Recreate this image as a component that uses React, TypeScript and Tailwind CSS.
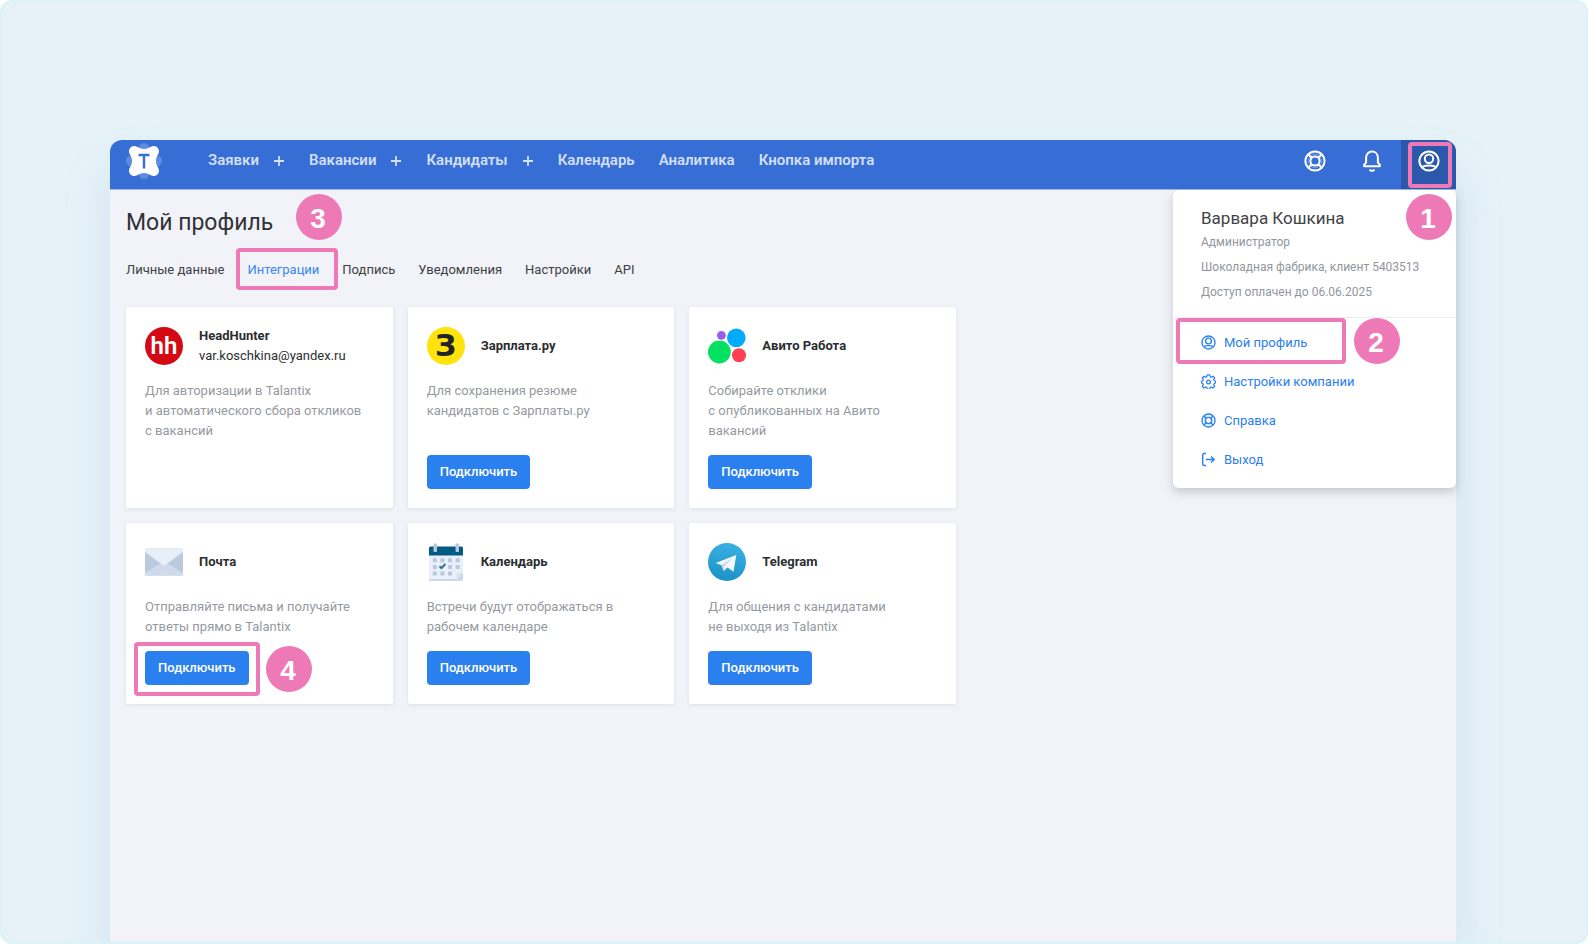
import type { ReactNode } from "react";

const Lifebuoy = ({ className }: { className?: string }) => (
  <svg viewBox="0 0 22 22" fill="none" stroke="currentColor" strokeWidth="2" className={className}>
    <circle cx="11" cy="11" r="9.6" />
    <circle cx="11" cy="11" r="4.6" />
    <path d="M4.4 4.4 8 8M17.6 4.4 14 8M4.4 17.6 8 14M17.6 17.6 14 14" />
    <circle cx="11" cy="11" r="6.8" strokeWidth="1" strokeOpacity="0.3" />
  </svg>
);

const UserCircle = ({ className }: { className?: string }) => (
  <svg viewBox="0 0 22 22" fill="none" stroke="currentColor" strokeWidth="2" className={className}>
    <circle cx="11" cy="11" r="9.6" />
    <circle cx="11" cy="8.8" r="4.2" />
    <path d="M4.4 16.8c1.8-.8 4-1.2 6.6-1.2s4.8.4 6.6 1.2" />
  </svg>
);

const Bell = ({ className }: { className?: string }) => (
  <svg viewBox="0 0 22 22" fill="none" stroke="currentColor" strokeWidth="2" strokeLinejoin="round" className={className}>
    <path d="M3.2 16.2v-1.6l1.9-2.1V7.8C5.1 4.3 7.5 1.6 11 1.6s5.9 2.7 5.9 6.2v4.7l1.9 2.1v1.6z" />
    <path d="M8.6 19.4c.6 1 1.4 1.4 2.4 1.4s1.8-.4 2.4-1.4" />
  </svg>
);

const Gear = ({ className }: { className?: string }) => (
  <svg viewBox="0 0 24 24" fill="none" stroke="currentColor" strokeWidth="2" strokeLinejoin="round" className={className}>
    <path d="M10 1.5h4l.8 3 1.7.7 2.7-1.6 2.8 2.8-1.6 2.7.7 1.7 2.4.7v2.9l-2.4.8-.7 1.7 1.6 2.7-2.8 2.8-2.7-1.6-1.7.7-.8 3h-4l-.8-3-1.7-.7-2.7 1.6L2 19.6l1.6-2.7-.7-1.7-2-.8v-2.9l2-.7.7-1.7L2 6.4l2.8-2.8 2.7 1.6 1.7-.7z" />
    <circle cx="12" cy="12.7" r="3" />
  </svg>
);

const Exit = ({ className }: { className?: string }) => (
  <svg viewBox="0 0 15 15" fill="none" stroke="currentColor" strokeWidth="1.4" className={className}>
    <path d="M5 1.5H3.2Q1.7 1.5 1.7 3v9q0 1.5 1.5 1.5H5M5 7.5h8M10 4.4l3.2 3.1L10 10.6" />
  </svg>
);

const Logo = () => (
  <svg viewBox="0 0 36 36" className="h-9 w-9">
    <g fill="#5f8bdf">
      <circle cx="18" cy="5.5" r="5.5" />
      <circle cx="18" cy="30.5" r="5.5" />
      <circle cx="5.5" cy="18" r="5.5" />
      <circle cx="30.5" cy="18" r="5.5" />
    </g>
    <path
      d="M8.5 3C11.5 3 13 6 18 6s6.5-3 9.5-3C31 3 33 5.5 33 8.5c0 3-3 4.5-3 9.5s3 6.5 3 9.5c0 3-2 5.5-5.5 5.5-3 0-4.5-3-9.5-3s-6.5 3-9.5 3C5 33 3 30.5 3 27.5 3 24.5 6 23 6 18s-3-6.5-3-9.5C3 5.5 5 3 8.5 3z"
      fill="#ffffff"
    />
    <path d="M12.5 12h11M18 12v13.5" stroke="#376ed6" strokeWidth="2.4" />
  </svg>
);

const Badge = ({ n, className }: { n: number; className: string }) => (
  <span
    className={`absolute z-20 flex h-[46px] w-[46px] items-center justify-center rounded-full bg-[#ee79b7] pr-[2px] pt-[3px] font-['Liberation_Sans',sans-serif] text-[28px] font-bold leading-none text-white ${className}`}
  >
    {n}
  </span>
);

const Frame = ({ className }: { className: string }) => (
  <span className={`pointer-events-none absolute z-20 rounded-sm border-4 border-[#ee79b7] ${className}`} />
);

const navItems = [
  { label: "Заявки", add: true },
  { label: "Вакансии", add: true },
  { label: "Кандидаты", add: true },
  { label: "Календарь" },
  { label: "Аналитика" },
  { label: "Кнопка импорта" },
];

const tabs = ["Личные данные", "Интеграции", "Подпись", "Уведомления", "Настройки", "API"];

const menuItems = [
  { label: "Мой профиль", icon: <UserCircle className="h-[15px] w-[15px]" /> },
  { label: "Настройки компании", icon: <Gear className="h-[15px] w-[15px]" /> },
  { label: "Справка", icon: <Lifebuoy className="h-[15px] w-[15px]" /> },
  { label: "Выход", icon: <Exit className="h-[15px] w-[15px]" /> },
];

const MailIcon = () => (
  <svg viewBox="0 0 38 38" className="h-[38px] w-[38px]">
    <rect y="5.5" width="38" height="27" rx="1.5" fill="#bccadf" />
    <path d="M0 30 19 18l19 12v1q0 1.5-1.5 1.5h-35Q0 32.5 0 31z" fill="#cfdaea" />
    <path d="M0 9V7q0-1.5 1.5-1.5h35Q38 5.5 38 7v2L19 23z" fill="#e7eff9" />
  </svg>
);

const CalendarIcon = () => (
  <svg viewBox="0 0 38 38" className="h-[38px] w-[38px]">
    <path d="M2 12h34v24.5q0 1.5-1.5 1.5h-31Q2 38 2 36.5z" fill="#cdd8e8" />
    <path d="M2 12h34v17.5L29.5 36h-26Q2 36 2 34.5z" fill="#e9f0fa" />
    <path d="M36 29.5 29.5 36v-5q0-1.5 1.5-1.5z" fill="#dae4f1" />
    <path d="M2 12.5V5q0-1.5 1.5-1.5h31Q36 3.5 36 5v7.5z" fill="#045a84" />
    <g fill="#b9c8dd">
      <rect x="6.5" y="0.5" width="3.5" height="8.5" rx="1" />
      <rect x="28.5" y="0.5" width="3.5" height="8.5" rx="1" />
      {[15.3, 21.9, 28.5].map((y, row) =>
        [5.8, 13.4, 21, 28.6].map((x, col) =>
          (row === 1 && col === 1) || (row === 2 && col === 3) ? null : (
            <rect key={x} x={x} y={y} width="4" height="4" rx="0.6" />
          )
        )
      )}
    </g>
    <path d="m12.5 23.2 2 1.8 3.9-4" fill="none" stroke="#2f709b" strokeWidth="2" />
  </svg>
);

const TelegramIcon = () => (
  <svg viewBox="0 0 38 38" className="h-[38px] w-[38px]">
    <defs>
      <linearGradient id="telegram" x1="0.6" y1="0" x2="0.4" y2="1">
        <stop stopColor="#3bb0e5" />
        <stop offset="1" stopColor="#1b91c5" />
      </linearGradient>
    </defs>
    <circle cx="19" cy="19" r="19" fill="url(#telegram)" />
    <path d="M28.3 12 7.7 20l5.8 2.2 2.2 5.8 3.8-3.5 6 4.2z" fill="#f4f9fd" />
    <path d="M13.5 21.7 25 14.5l-8.3 8.7-1 4.8z" fill="#c8daea" />
  </svg>
);

const cards: { title: string; sub?: string; text: string; icon: ReactNode; connect: boolean }[] = [
  {
    title: "HeadHunter",
    sub: "var.koschkina@yandex.ru",
    text: "Для авторизации в Talantix\nи автоматического сбора откликов\nс вакансий",
    connect: false,
    icon: (
      <span className="flex h-[38px] w-[38px] items-center justify-center rounded-full bg-[#d30a14] text-2xl font-semibold leading-none text-white">
        hh
      </span>
    ),
  },
  {
    title: "Зарплата.ру",
    text: "Для сохранения резюме\nкандидатов с Зарплаты.ру",
    connect: true,
    icon: (
      <span className="flex h-[38px] w-[38px] items-center justify-center rounded-full bg-[#ffe30a] font-['DejaVu_Sans',sans-serif] text-3xl font-bold leading-none text-[#212529]">
        З
      </span>
    ),
  },
  {
    title: "Авито Работа",
    text: "Собирайте отклики\nс опубликованных на Авито\nвакансий",
    connect: true,
    icon: (
      <svg viewBox="0 0 38 38" className="h-[38px] w-[38px]">
        <circle cx="11.4" cy="25" r="11.4" fill="#04e061" />
        <circle cx="28.3" cy="10.8" r="9.3" fill="#00aaff" />
        <circle cx="31" cy="28.3" r="7" fill="#ff4053" />
        <circle cx="13.4" cy="8.3" r="4.4" fill="#965eeb" />
      </svg>
    ),
  },
  {
    title: "Почта",
    text: "Отправляйте письма и получайте\nответы прямо в Talantix",
    connect: true,
    icon: <MailIcon />,
  },
  {
    title: "Календарь",
    text: "Встречи будут отображаться в\nрабочем календаре",
    connect: true,
    icon: <CalendarIcon />,
  },
  {
    title: "Telegram",
    text: "Для общения с кандидатами\nне выходя из Talantix",
    connect: true,
    icon: <TelegramIcon />,
  },
];

const UserMenu = () => (
  <div className="absolute right-0 top-full z-10 mt-px w-[283px] rounded-md bg-white pb-[9px] shadow-[0_4px_10px_rgba(60,70,90,0.25)]">
    <div className="border-b border-[#ebedf0] pb-3 pl-7 pt-4">
      <p className="text-[17px] leading-6 text-[#404347]">Варвара Кошкина</p>
      <div className="text-xs leading-[25px] text-[#92969c]">
        <p>Администратор</p>
        <p>Шоколадная фабрика, клиент 5403513</p>
        <p>Доступ оплачен до 06.06.2025</p>
      </div>
    </div>
    <ul className="pt-[5px]">
      {menuItems.map((item, idx) => (
        <li key={item.label} className="relative flex h-[39px] items-center pl-7">
          <a href="#" className="flex items-center gap-2 text-[13px] text-[#2a80ee]">
            {item.icon}
            {item.label}
          </a>
          {idx === 0 && (
            <>
              <Frame className="left-[3px] -top-[5px] h-[46px] w-[170px]" />
              <Badge n={2} className="left-[181px] -top-[5px]" />
            </>
          )}
        </li>
      ))}
    </ul>
  </div>
);

const Header = () => (
  <header className="relative flex h-[50px] items-stretch rounded-t-xl border-b border-[#9db7ea] bg-[#376ed6] pl-4">
    <a href="#" aria-label="Talantix" className="pt-[3px]">
      <Logo />
    </a>
    <nav className="ml-[46px] flex flex-1 items-center gap-6 pb-2 text-[15px] font-semibold text-[#d3dff6]">
      {navItems.map((item) => (
        <div key={item.label} className="flex items-center gap-[15px]">
          <a href="#" className="whitespace-nowrap">
            {item.label}
          </a>
          {item.add && (
            <button aria-label={`Добавить: ${item.label}`} className="pr-px">
              <svg viewBox="0 0 10 10" className="h-[10px] w-[10px]" stroke="currentColor" strokeWidth="1.8">
                <path d="M5 0v10M0 5h10" />
              </svg>
            </button>
          )}
        </div>
      ))}
    </nav>
    <div className="flex text-white">
      <button aria-label="Помощь" className="flex w-[57px] items-center justify-center pb-[7px] pr-[2px]">
        <Lifebuoy className="h-[22px] w-[22px]" />
      </button>
      <button aria-label="Уведомления" className="flex w-[57px] items-center justify-center pb-[7px] pr-[2px]">
        <Bell className="h-[22px] w-[22px]" />
      </button>
      <button
        aria-label="Профиль"
        className="relative flex w-[55px] items-center justify-center rounded-tr-xl bg-[#2c58ab] pb-[7px]"
      >
        <UserCircle className="h-[22px] w-[22px]" />
        <Frame className="right-1 top-[2px] h-[46px] w-11" />
        <Badge n={1} className="right-1 top-[54px]" />
      </button>
    </div>
    <UserMenu />
  </header>
);

export default function App() {
  return (
    <div className="bg-white">
      <div className="flex min-h-screen flex-col overflow-hidden rounded-xl border-2 border-[#dbf2f9] bg-[#e6f2f8] pl-[108px] pr-[130px] pt-[138px] font-[Roboto,sans-serif]">
        <div className="flex flex-1 flex-col rounded-t-xl bg-[#f2f3f8] shadow-[0_30px_50px_rgba(90,160,200,0.16)]">
          <Header />
          <main className="px-4 pb-8 pt-[17px]">
            <div className="relative inline-block">
              <h1 className="text-[23px] leading-8 text-[#303235]">Мой профиль</h1>
              <Badge n={3} className="left-[170px] -top-[13px]" />
            </div>
            <ul className="mt-[21px] flex gap-[23px] text-[13px] leading-5 text-[#3c3f43]">
              {tabs.map((tab, idx) => (
                <li key={tab} className="relative">
                  <a href="#" className={idx === 1 ? "text-[#3a86f2]" : undefined}>
                    {tab}
                  </a>
                  {idx === 1 && <Frame className="-left-[11px] -top-3 h-[42px] w-[102px]" />}
                </li>
              ))}
            </ul>
            <section className="mt-[27px] grid max-w-[830px] grid-cols-3 gap-[15px]">
              {cards.map((card) => (
                <article
                  key={card.title}
                  className="flex flex-col rounded-xs bg-white px-[19px] pb-[19px] pt-5 shadow-[0_1px_4px_rgba(60,90,120,0.12)]"
                >
                  <div className="flex h-[38px] items-center gap-4">
                    {card.icon}
                    <div className="text-[13px] leading-5 text-[#2c2e31]">
                      <h2 className="font-bold">{card.title}</h2>
                      {card.sub && <p>{card.sub}</p>}
                    </div>
                  </div>
                  <p className="mb-[14px] mt-4 whitespace-pre-line text-[13px] leading-5 text-[#969a9f]">{card.text}</p>
                  {card.connect ? (
                    <div className="relative mt-auto">
                      <button className="h-[34px] rounded-[4px] bg-[#2a80ee] px-[13px] pb-px text-[13px] font-medium text-white">
                        Подключить
                      </button>
                      {card.title === "Почта" && (
                        <>
                          <Frame className="-left-[11px] -top-[9px] h-[54px] w-[126px]" />
                          <Badge n={4} className="-top-[5px] left-[121px]" />
                        </>
                      )}
                    </div>
                  ) : (
                    <div className="h-[34px]" />
                  )}
                </article>
              ))}
            </section>
          </main>
        </div>
      </div>
    </div>
  );
}
